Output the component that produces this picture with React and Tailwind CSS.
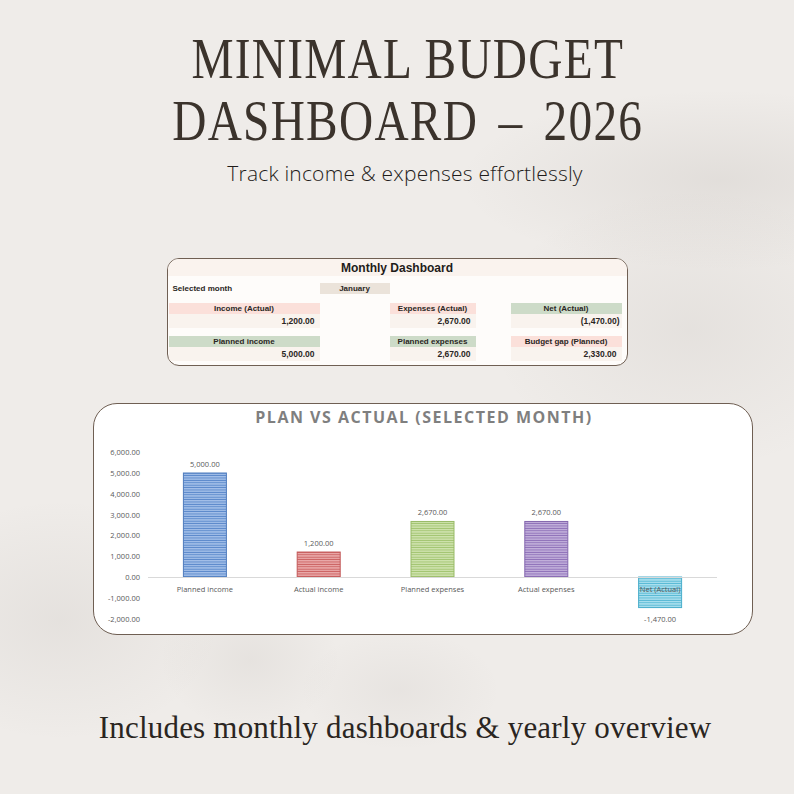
import React from "react";

const serif = { fontFamily: '"Liberation Serif", "Times New Roman", serif' };

function LabelCell({ children, tone, className = "" }) {
  const bg = tone === "pink" ? "bg-[#fbe0da]" : tone === "green" ? "bg-[#cddbc8]" : "bg-[#ebe3da]";
  return (
    <div className={`${bg} h-[11px] flex items-center justify-center text-[8px] font-bold text-[#2a2623] leading-none ${className}`}>
      {children}
    </div>
  );
}

function ValueCell({ children, pr = "pr-[5px]" }) {
  return (
    <div className={`bg-[#f9f3ee] h-[14px] flex items-center justify-end ${pr} text-[8.5px] font-bold text-[#2a2623] leading-none`}>
      {children}
    </div>
  );
}

function MonthlyCard() {
  return (
    <div
      className="w-[461px] h-[108px] rounded-[12px] border-[1.5px] border-[#6f5f53] bg-[#fefcfa] overflow-hidden flex flex-col"
      style={{ fontFamily: '"Liberation Sans", Arial, sans-serif' }}
    >
      <div className="h-[17px] bg-[#faf3ee] flex items-center justify-center text-[12px] font-bold text-[#1f1c1a] pt-[1px]">
        Monthly Dashboard
      </div>
      <div className="grid grid-cols-[151px_70px_86px_35px_111px] pl-[1px] mt-[7px] h-[11px]">
        <div className="flex items-center pl-[4px] text-[8px] font-bold text-[#2a2623] leading-none">Selected month</div>
        <LabelCell tone="beige">January</LabelCell>
      </div>
      <div className="grid grid-cols-[151px_70px_86px_35px_111px] pl-[1px] mt-[9px]">
        <LabelCell tone="pink">Income (Actual)</LabelCell>
        <div />
        <LabelCell tone="pink">Expenses (Actual)</LabelCell>
        <div />
        <LabelCell tone="green">Net (Actual)</LabelCell>
        <ValueCell>1,200.00</ValueCell>
        <div />
        <ValueCell>2,670.00</ValueCell>
        <div />
        <ValueCell pr="pr-[2px]">(1,470.00)</ValueCell>
      </div>
      <div className="grid grid-cols-[151px_70px_86px_35px_111px] pl-[1px] mt-[8px]">
        <LabelCell tone="green">Planned income</LabelCell>
        <div />
        <LabelCell tone="green">Planned expenses</LabelCell>
        <div />
        <LabelCell tone="pink">Budget gap (Planned)</LabelCell>
        <ValueCell>5,000.00</ValueCell>
        <div />
        <ValueCell>2,670.00</ValueCell>
        <div />
        <ValueCell>2,330.00</ValueCell>
      </div>
    </div>
  );
}

const bars = [
  { name: "Planned income", v: 5000, label: "5,000.00", light: "#a3bfe8", dark: "#5585c9", border: "#4f7cbd" },
  { name: "Actual income", v: 1200, label: "1,200.00", light: "#eaa9a9", dark: "#c95d5d", border: "#c25757" },
  { name: "Planned expenses", v: 2670, label: "2,670.00", light: "#cfe2ae", dark: "#9fc26c", border: "#98ba66" },
  { name: "Actual expenses", v: 2670, label: "2,670.00", light: "#c2b0db", dark: "#8b6db6", border: "#8467ae" },
  { name: "Net (Actual)", v: -1470, label: "-1,470.00", light: "#ace0ee", dark: "#50b6d3", border: "#4aaecb" },
];

function Chart() {
  const zeroY = 149;
  const k = 0.0208;
  const ticks = [6000, 5000, 4000, 3000, 2000, 1000, 0, -1000, -2000];
  const fmt = (t) => {
    if (t === 0) return "0.00";
    const s = Math.abs(t).toLocaleString("en-US") + ".00";
    return t < 0 ? "-" + s : s;
  };
  const left = 54;
  const right = 623;
  const cw = (right - left) / 5;
  const bw = 43;
  const font = '"Open Sans", "Liberation Sans", Arial, sans-serif';
  return (
    <svg width="657" height="203" viewBox="0 0 657 203" className="block">
      <defs>
        {bars.map((b, i) => (
          <pattern key={i} id={`st${i}`} width="4" height="2.4" patternUnits="userSpaceOnUse">
            <rect width="4" height="2.4" fill={b.light} />
            <rect width="4" height="0.9" y="1.5" fill={b.dark} />
          </pattern>
        ))}
      </defs>
      {ticks.map((t) => (
        <text
          key={t}
          x="46"
          y={zeroY - t * k + 3}
          textAnchor="end"
          fontSize="7.5"
          fill="#595959"
          fontFamily={font}
        >
          {fmt(t)}
        </text>
      ))}
      {bars.map((b, i) => {
        const cx = left + cw * (i + 0.5);
        const h = Math.abs(b.v) * k;
        const y = b.v >= 0 ? zeroY - h : zeroY;
        return (
          <g key={i}>
            <rect x={cx - bw / 2} y={y} width={bw} height={h} fill={`url(#st${i})`} stroke={b.border} strokeWidth="1" />
            <text
              x={cx}
              y={b.v >= 0 ? y - 6 : y + h + 14}
              textAnchor="middle"
              fontSize="7.5"
              fill="#595959"
              fontFamily={font}
            >
              {b.label}
            </text>
          </g>
        );
      })}
      <line x1={left} y1={zeroY + 0.5} x2={right} y2={zeroY + 0.5} stroke="#d9d9d9" strokeWidth="1" />
      {bars.map((b, i) => {
        const cx = left + cw * (i + 0.5);
        return (
          <text
            key={"c" + i}
            x={cx}
            y={zeroY + 15}
            textAnchor="middle"
            fontSize="7.5"
            fill="#595959"
            fontFamily={font}
          >
            {b.name}
          </text>
        );
      })}
    </svg>
  );
}

function ChartCard() {
  return (
    <div className="w-[660px] h-[232px] rounded-[24px] border-[1.5px] border-[#6f5f53] bg-white overflow-hidden flex flex-col">
      <div
        className="h-[24px] flex items-center justify-center text-[16px] font-bold tracking-[1.5px] text-[#7f7f7f] pt-[2px] pl-[2px]"
        style={{ fontFamily: '"Open Sans", "Liberation Sans", sans-serif' }}
      >
        PLAN VS ACTUAL (SELECTED MONTH)
      </div>
      <Chart />
    </div>
  );
}

export default function App() {
  return (
    <div className="w-[794px] h-[794px] overflow-hidden bg-[#efece9] bg-[radial-gradient(ellipse_260px_90px_at_720px_180px,rgba(110,100,92,0.10),transparent),radial-gradient(ellipse_200px_140px_at_690px_330px,rgba(110,100,92,0.08),transparent),radial-gradient(ellipse_160px_120px_at_60px_620px,rgba(110,100,92,0.08),transparent),radial-gradient(ellipse_90px_70px_at_250px_660px,rgba(110,100,92,0.07),transparent),radial-gradient(ellipse_100px_60px_at_400px_690px,rgba(110,100,92,0.06),transparent)] flex flex-col items-center">
      <div
        className="mt-[28px] ml-[22px] text-[56px] leading-[62px] tracking-[1.5px] text-[#3b332c] text-center scale-x-[0.845] whitespace-nowrap"
        style={serif}
      >
        <div>MINIMAL BUDGET</div>
        <div>
          DASHBOARD<span className="mx-[24px]">–</span>2026
        </div>
      </div>
      <div
        className="mt-[7px] ml-[16px] text-[21px] leading-[28px] font-light text-[#1f1c1a] tracking-[0.2px]"
        style={{ fontFamily: '"Open Sans", "Liberation Sans", sans-serif' }}
      >
        Track income &amp; expenses effortlessly
      </div>
      <div className="mt-[71px]">
        <MonthlyCard />
      </div>
      <div className="mt-[37px] self-start ml-[93px]">
        <ChartCard />
      </div>
      <div className="mt-[74px] ml-[16px] text-[31px] leading-[38px] tracking-[0.2px] text-[#2a2521]" style={serif}>
        Includes monthly dashboards &amp; yearly overview
      </div>
    </div>
  );
}
